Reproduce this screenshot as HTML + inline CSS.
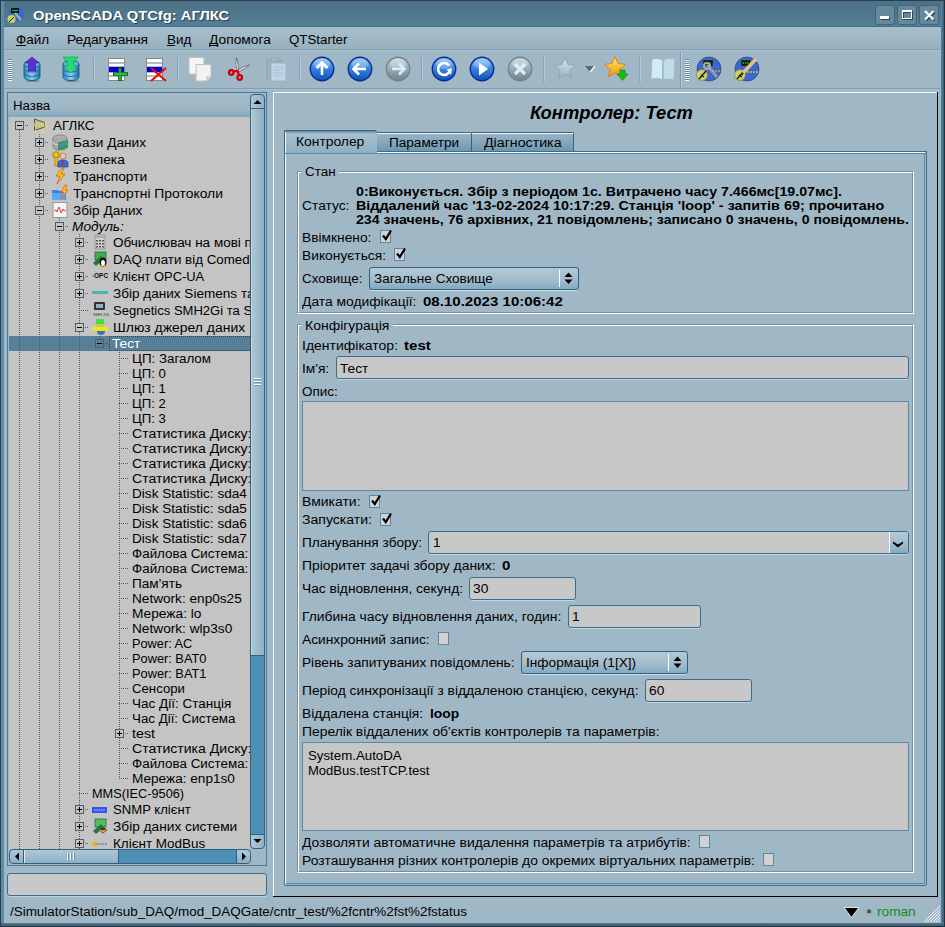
<!DOCTYPE html>
<html><head><meta charset="utf-8"><title>OpenSCADA QTCfg</title><style>
*{margin:0;padding:0;box-sizing:border-box}
html,body{width:945px;height:927px;overflow:hidden;background:#527d94}
body{position:relative;font-family:"Liberation Sans",sans-serif}
.a{position:absolute}
.t{position:absolute;white-space:pre;transform-origin:0 0;font-family:"Liberation Sans",sans-serif}
svg{position:absolute;overflow:visible}
</style></head><body>
<div class="a" style="left:0px;top:0px;width:945px;height:927px;background:#527d94"></div>
<div class="a" style="left:0px;top:0px;width:945px;height:1px;background:#2a3f4c"></div>
<div class="a" style="left:0px;top:0px;width:1px;height:927px;background:#2a3f4c"></div>
<div class="a" style="left:944px;top:0px;width:1px;height:927px;background:#22343f"></div>
<div class="a" style="left:0px;top:926px;width:945px;height:1px;background:#22343f"></div>
<div class="a" style="left:1px;top:1px;width:3px;height:925px;background:#5f8ca5"></div>
<div class="a" style="left:941px;top:1px;width:3px;height:925px;background:linear-gradient(90deg,#5a86a0,#3c5c6e)"></div>
<div class="a" style="left:1px;top:923px;width:943px;height:3px;background:linear-gradient(#4e7a94,#3a5a6c)"></div>
<div class="a" style="left:4px;top:1px;width:937px;height:25px;background:linear-gradient(#4c7186,#537e95)"></div>
<div class="a" style="left:4px;top:26px;width:937px;height:1px;background:#466d82"></div>
<div class="a" style="left:875px;top:5px;width:20px;height:20px;background:#65899d;border:1px solid #456476;border-radius:3px"></div>
<div class="a" style="left:897px;top:5px;width:20px;height:20px;background:#65899d;border:1px solid #456476;border-radius:3px"></div>
<div class="a" style="left:919px;top:5px;width:20px;height:20px;background:#65899d;border:1px solid #456476;border-radius:3px"></div>
<div class="a" style="left:881px;top:17px;width:9px;height:3px;background:#2e4654"></div>
<div class="a" style="left:880px;top:16px;width:9px;height:3px;background:#fff"></div>
<div class="a" style="left:903px;top:11px;width:10px;height:9px;border:1.5px solid #2e4654;border-top-width:2px"></div>
<div class="a" style="left:902px;top:10px;width:10px;height:9px;border:1.5px solid #fff;border-top-width:2px"></div>
<svg class="a" style="left:923px;top:9px" width="13" height="13"><path d="M2.5 2.5L10.5 10.5M10.5 2.5L2.5 10.5" stroke="#2e4654" stroke-width="2" transform="translate(1,1)"/><path d="M2 2L10.5 10.5M10.5 2L2 10.5" stroke="#fff" stroke-width="2"/></svg>
<div class="t" style="left:33px;top:8px;font-size:13.5px;line-height:16px;color:#fff;transform:scaleX(1.0927);font-weight:bold;text-shadow:1px 1px 1px rgba(20,40,50,.7);">OpenSCADA QTCfg: АГЛКС</div>
<div class="a" style="left:4px;top:27px;width:937px;height:22px;background:linear-gradient(#a7bfcc,#98b1bf)"></div>
<div class="a" style="left:4px;top:49px;width:937px;height:1px;background:#7e9eb1"></div>
<div class="a" style="left:4px;top:50px;width:937px;height:1px;background:#aac1cd"></div>
<div class="a" style="left:4px;top:51px;width:937px;height:37px;background:#a0b8c6"></div>
<div class="a" style="left:4px;top:88px;width:937px;height:1px;background:#7e9eb1"></div>
<div class="a" style="left:4px;top:89px;width:937px;height:1px;background:#a9c0cc"></div>
<div class="a" style="left:4px;top:90px;width:937px;height:833px;background:#a0b8c6"></div>
<div class="t" style="left:16px;top:32px;font-size:12.5px;line-height:16px;color:#000;transform:scaleX(1.0788);">Файл</div>
<div class="a" style="left:16px;top:45px;width:10px;height:1px;background:#000"></div>
<div class="t" style="left:67px;top:32px;font-size:12.5px;line-height:16px;color:#000;transform:scaleX(1.1013);">Редагування</div>
<div class="t" style="left:167px;top:32px;font-size:12.5px;line-height:16px;color:#000;transform:scaleX(1.0753);">Вид</div>
<div class="a" style="left:167px;top:45px;width:8px;height:1px;background:#000"></div>
<div class="t" style="left:209px;top:32px;font-size:12.5px;line-height:16px;color:#000;transform:scaleX(1.1054);">Допомога</div>
<div class="a" style="left:209px;top:45px;width:9px;height:1px;background:#000"></div>
<div class="t" style="left:289px;top:32px;font-size:12.5px;line-height:16px;color:#000;transform:scaleX(1.0644);">QTStarter</div>
<div class="a" style="left:7px;top:92px;width:260px;height:774px;border:1px solid #4d7a96"></div>
<div class="a" style="left:8px;top:93px;width:242px;height:24px;background:linear-gradient(#a4bcca 0,#9db6c4 70%,#7fa8c0 100%)"></div>
<div class="t" style="left:13px;top:98px;font-size:12.5px;line-height:16px;color:#000;transform:scaleX(1.0616);">Назва</div>
<div class="a" style="left:9px;top:117px;width:241px;height:732px;background:#c4c4c4"></div>
<div class="a" style="left:250px;top:108px;width:15px;height:728px;background:#4e8fb4;border-left:1px solid #2f6080;border-right:1px solid #2f6080"></div>
<div class="a" style="left:250px;top:108px;width:15px;height:548px;background:linear-gradient(90deg,#b0c8d6,#8eb0c4);border:1px solid #2f6080"></div>
<div class="a" style="left:251px;top:109px;width:1px;height:546px;background:#c4d8e2"></div>
<div class="a" style="left:250px;top:94px;width:15px;height:15px;background:linear-gradient(90deg,#b0c8d6,#8eb0c4);border:1px solid #2f6080;border-radius:4px 4px 0 0"></div>
<div class="a" style="left:250px;top:834px;width:15px;height:15px;background:linear-gradient(90deg,#b0c8d6,#8eb0c4);border:1px solid #2f6080;border-radius:0 0 4px 4px"></div>
<svg class="a" style="left:253px;top:99px" width="9" height="6"><path d="M0.5 5L4.5 1L8.5 5Z" fill="#000"/></svg>
<svg class="a" style="left:253px;top:838px" width="9" height="6"><path d="M0.5 1L4.5 5L8.5 1Z" fill="#000"/></svg>
<div class="a" style="left:254px;top:378px;width:7px;height:1px;background:#fff"></div>
<div class="a" style="left:254px;top:379px;width:7px;height:1px;background:#6a96b0"></div>
<div class="a" style="left:254px;top:381px;width:7px;height:1px;background:#fff"></div>
<div class="a" style="left:254px;top:382px;width:7px;height:1px;background:#6a96b0"></div>
<div class="a" style="left:254px;top:384px;width:7px;height:1px;background:#fff"></div>
<div class="a" style="left:254px;top:385px;width:7px;height:1px;background:#6a96b0"></div>
<div class="a" style="left:23px;top:849px;width:214px;height:15px;background:#4e8fb4;border-top:1px solid #2f6080;border-bottom:1px solid #2f6080"></div>
<div class="a" style="left:23px;top:849px;width:96px;height:15px;background:linear-gradient(#b0c8d6,#8eb0c4);border:1px solid #2f6080"></div>
<div class="a" style="left:24px;top:850px;width:1px;height:13px;background:#e0ecf2"></div>
<div class="a" style="left:9px;top:849px;width:15px;height:15px;background:linear-gradient(#b0c8d6,#8eb0c4);border:1px solid #2f6080;border-radius:4px 0 0 4px"></div>
<div class="a" style="left:236px;top:849px;width:15px;height:15px;background:linear-gradient(#b0c8d6,#8eb0c4);border:1px solid #2f6080;border-radius:0 4px 4px 0"></div>
<svg class="a" style="left:14px;top:852px" width="6" height="9"><path d="M5 0.5L1 4.5L5 8.5Z" fill="#000"/></svg>
<svg class="a" style="left:241px;top:852px" width="6" height="9"><path d="M1 0.5L5 4.5L1 8.5Z" fill="#000"/></svg>
<div class="a" style="left:67px;top:853px;width:1px;height:7px;background:#fff"></div>
<div class="a" style="left:68px;top:853px;width:1px;height:7px;background:#6a96b0"></div>
<div class="a" style="left:70px;top:853px;width:1px;height:7px;background:#fff"></div>
<div class="a" style="left:71px;top:853px;width:1px;height:7px;background:#6a96b0"></div>
<div class="a" style="left:73px;top:853px;width:1px;height:7px;background:#fff"></div>
<div class="a" style="left:74px;top:853px;width:1px;height:7px;background:#6a96b0"></div>
<div class="a" style="left:251px;top:849px;width:15px;height:15px;background:#a0b8c6"></div>
<div class="a" style="left:7px;top:873px;width:260px;height:23px;background:#c8c8c8;border:1px solid #3a6e90;border-radius:3px"></div>
<div class="a" style="left:9px;top:896px;width:257px;height:1px;background:#c0d4de"></div>
<div class="a" style="left:273px;top:92px;width:1px;height:805px;background:#f4f8fa"></div>
<div class="a" style="left:273px;top:92px;width:665px;height:1px;background:#f4f8fa"></div>
<div class="a" style="left:937px;top:92px;width:1px;height:805px;background:#000"></div>
<div class="a" style="left:273px;top:896px;width:665px;height:1px;background:#000"></div>
<div class="t" style="left:10px;top:904px;font-size:12.5px;line-height:16px;color:#000;transform:scaleX(1.0747);">/SimulatorStation/sub_DAQ/mod_DAQGate/cntr_test/%2fcntr%2fst%2fstatus</div>
<div class="t" style="left:877px;top:904px;font-size:12.5px;line-height:16px;color:#0f8f10;transform:scaleX(1.0913);">roman</div>
<div class="t" style="left:866px;top:906px;font-size:12.5px;line-height:16px;color:#222;transform:scaleX(1.2308);">*</div>
<svg class="a" style="left:843px;top:906px" width="18" height="13"><path d="M1 1.5H16L8.5 11.5Z" fill="#000" stroke="#dde6ea" stroke-width="1"/></svg>
<svg class="a" style="left:923px;top:905px" width="18" height="18"><g stroke="#f0f4f6" stroke-width="1"><line x1="17" y1="1" x2="1" y2="17"/><line x1="17" y1="4" x2="4" y2="17"/><line x1="17" y1="7" x2="7" y2="17"/><line x1="17" y1="10" x2="10" y2="17"/><line x1="17" y1="13" x2="13" y2="17"/><line x1="17" y1="16" x2="16" y2="17"/></g></svg>
<div class="t" style="left:530px;top:102px;font-size:17.7px;line-height:22px;color:#000;transform:scaleX(1.0380);font-weight:bold;font-style:italic;">Контролер: Тест</div>
<div class="a" style="left:284px;top:153px;width:1px;height:732px;background:#3d6f8f"></div>
<div class="a" style="left:285px;top:153px;width:1px;height:731px;background:#f4f8fa"></div>
<div class="a" style="left:926px;top:151px;width:1px;height:734px;background:#3d6f8f"></div>
<div class="a" style="left:924px;top:153px;width:1px;height:731px;background:#5b8aa5"></div>
<div class="a" style="left:285px;top:885px;width:641px;height:1px;background:#3d6f8f"></div>
<div class="a" style="left:286px;top:883px;width:639px;height:1px;background:#5b8aa5"></div>
<div class="a" style="left:376px;top:151px;width:550px;height:1px;background:#3d6f8f"></div>
<div class="a" style="left:376px;top:152px;width:549px;height:1px;background:#f4f8fa"></div>
<div class="a" style="left:284px;top:153px;width:642px;height:1px;background:#5a88a4"></div>
<div class="a" style="left:376px;top:132px;width:96px;height:19px;background:linear-gradient(#9ab6c7,#6e98b0);border:1px solid #3d6278;border-bottom:none;border-radius:2px 2px 0 0"></div>
<div class="a" style="left:377px;top:133px;width:94px;height:1px;background:#f4f8fa"></div>
<div class="a" style="left:471px;top:132px;width:103px;height:19px;background:linear-gradient(#9ab6c7,#6e98b0);border:1px solid #3d6278;border-bottom:none;border-radius:2px 2px 0 0"></div>
<div class="a" style="left:472px;top:133px;width:101px;height:1px;background:#f4f8fa"></div>
<div class="a" style="left:284px;top:130px;width:93px;height:23px;background:linear-gradient(#5f859c 0,#a6c0ce 3px,#8eb0c3 100%);border:1px solid #3d6278;border-bottom:none;border-right:none;border-radius:2px 2px 0 0"></div>
<div class="a" style="left:285px;top:132px;width:1px;height:21px;background:#f4f8fa"></div>
<div class="t" style="left:296px;top:134px;font-size:12.5px;line-height:16px;color:#000;transform:scaleX(1.1074);">Контролер</div>
<div class="t" style="left:389px;top:135px;font-size:12.5px;line-height:16px;color:#000;transform:scaleX(1.0861);">Параметри</div>
<div class="t" style="left:484px;top:135px;font-size:12.5px;line-height:16px;color:#000;transform:scaleX(1.1360);">Діагностика</div>
<div class="a" style="left:297px;top:171px;width:617px;height:143px;border:1px solid #7c8e98;border-right-color:#fff;border-bottom-color:#fff"></div>
<div class="a" style="left:298px;top:172px;width:615px;height:141px;border:1px solid #fff;border-right-color:#7c8e98;border-bottom-color:#7c8e98"></div>
<div class="a" style="left:301px;top:167px;width:38px;height:8px;background:#a0b8c6"></div>
<div class="t" style="left:305px;top:164px;font-size:12.5px;line-height:16px;color:#000;transform:scaleX(1.0741);">Стан</div>
<div class="t" style="left:356px;top:184px;font-size:12.5px;line-height:16px;color:#000;transform:scaleX(1.1357);font-weight:bold;">0:Виконується. Збір з періодом 1с. Витрачено часу 7.466мс[19.07мс].</div>
<div class="t" style="left:356px;top:198px;font-size:12.5px;line-height:16px;color:#000;transform:scaleX(1.1490);font-weight:bold;">Віддалений час '13-02-2024 10:17:29. Станція 'loop' - запитів 69; прочитано</div>
<div class="t" style="left:356px;top:212px;font-size:12.5px;line-height:16px;color:#000;transform:scaleX(1.1303);font-weight:bold;">234 значень, 76 архівних, 21 повідомлень; записано 0 значень, 0 повідомлень.</div>
<div class="t" style="left:302px;top:198px;font-size:12.5px;line-height:16px;color:#000;transform:scaleX(1.1039);">Статус:</div>
<div class="t" style="left:302px;top:230px;font-size:12.5px;line-height:16px;color:#000;transform:scaleX(1.1014);">Ввімкнено:</div>
<div class="a" style="left:380px;top:230px;width:11px;height:13px;background:#d2d2d2;border:1px solid #5b88a6"></div>
<svg class="a" style="left:382px;top:229px" width="10" height="12"><path d="M1 6.5L3.8 10L9 1.5" fill="none" stroke="#000" stroke-width="2.2"/></svg>
<div class="t" style="left:302px;top:248px;font-size:12.5px;line-height:16px;color:#000;transform:scaleX(1.1040);">Виконується:</div>
<div class="a" style="left:394px;top:248px;width:11px;height:13px;background:#d2d2d2;border:1px solid #5b88a6"></div>
<svg class="a" style="left:396px;top:247px" width="10" height="12"><path d="M1 6.5L3.8 10L9 1.5" fill="none" stroke="#000" stroke-width="2.2"/></svg>
<div class="t" style="left:302px;top:271px;font-size:12.5px;line-height:16px;color:#000;transform:scaleX(1.0736);">Сховище:</div>
<div class="a" style="left:369px;top:267px;width:210px;height:23px;background:linear-gradient(#b3cad7,#a2bbca 60%,#7fabc4);border:1px solid #2f6080;border-radius:3px"></div>
<div class="a" style="left:371px;top:290px;width:206px;height:1px;background:#d3dfe5"></div>
<div class="a" style="left:559px;top:270px;width:1px;height:17px;background:#fff"></div>
<svg class="a" style="left:564px;top:272px" width="9" height="13"><path d="M0.5 5L4.5 0.5L8.5 5Z M0.5 7.5L4.5 12L8.5 7.5Z" fill="#000"/></svg>
<div class="t" style="left:374px;top:271px;font-size:12.5px;line-height:16px;color:#000;transform:scaleX(1.0838);">Загальне Сховище</div>
<div class="t" style="left:302px;top:294px;font-size:12.5px;line-height:16px;color:#000;transform:scaleX(1.1075);">Дата модифікації:</div>
<div class="t" style="left:423px;top:294px;font-size:12.5px;line-height:16px;color:#000;transform:scaleX(1.2043);font-weight:bold;">08.10.2023 10:06:42</div>
<div class="a" style="left:297px;top:324px;width:617px;height:549px;border:1px solid #7c8e98;border-right-color:#fff;border-bottom-color:#fff"></div>
<div class="a" style="left:298px;top:325px;width:615px;height:547px;border:1px solid #fff;border-right-color:#7c8e98;border-bottom-color:#7c8e98"></div>
<div class="a" style="left:301px;top:320px;width:92px;height:8px;background:#a0b8c6"></div>
<div class="t" style="left:305px;top:318px;font-size:12.5px;line-height:16px;color:#000;transform:scaleX(1.1182);">Конфігурація</div>
<div class="t" style="left:302px;top:338px;font-size:12.5px;line-height:16px;color:#000;transform:scaleX(1.1197);">Ідентифікатор:</div>
<div class="t" style="left:404px;top:338px;font-size:12.5px;line-height:16px;color:#000;transform:scaleX(1.2038);font-weight:bold;">test</div>
<div class="t" style="left:302px;top:361px;font-size:12.5px;line-height:16px;color:#000;transform:scaleX(1.0993);">Ім'я:</div>
<div class="a" style="left:336px;top:356px;width:573px;height:23px;background:#c8c8c8;border:1px solid #3a6e90;border-radius:3px"></div>
<div class="a" style="left:338px;top:379px;width:569px;height:1px;background:#c3d5df"></div>
<div class="t" style="left:340px;top:361px;font-size:12.5px;line-height:16px;color:#000;transform:scaleX(1.0942);">Тест</div>
<div class="t" style="left:302px;top:384px;font-size:12.5px;line-height:16px;color:#000;transform:scaleX(1.0762);">Опис:</div>
<div class="a" style="left:302px;top:401px;width:607px;height:90px;background:#c6c6c6;border:1px solid #5a8aa8"></div>
<div class="t" style="left:302px;top:494px;font-size:12.5px;line-height:16px;color:#000;transform:scaleX(1.1175);">Вмикати:</div>
<div class="a" style="left:369px;top:495px;width:11px;height:13px;background:#d2d2d2;border:1px solid #5b88a6"></div>
<svg class="a" style="left:371px;top:494px" width="10" height="12"><path d="M1 6.5L3.8 10L9 1.5" fill="none" stroke="#000" stroke-width="2.2"/></svg>
<div class="t" style="left:302px;top:512px;font-size:12.5px;line-height:16px;color:#000;transform:scaleX(1.1253);">Запускати:</div>
<div class="a" style="left:380px;top:513px;width:11px;height:13px;background:#d2d2d2;border:1px solid #5b88a6"></div>
<svg class="a" style="left:382px;top:512px" width="10" height="12"><path d="M1 6.5L3.8 10L9 1.5" fill="none" stroke="#000" stroke-width="2.2"/></svg>
<div class="t" style="left:302px;top:535px;font-size:12.5px;line-height:16px;color:#000;transform:scaleX(1.0900);">Планування збору:</div>
<div class="a" style="left:428px;top:531px;width:481px;height:23px;background:#c8c8c8;border:1px solid #3a6e90;border-radius:3px"></div>
<div class="a" style="left:889px;top:532px;width:19px;height:21px;background:linear-gradient(#b3cad7,#a2bbca 60%,#7fabc4);border-left:1px solid #fff;border-radius:0 2px 2px 0"></div>
<svg class="a" style="left:893px;top:541px" width="10" height="7"><path d="M0 0.5L5 3.5L10 0.5V2.5L5 6.5L0 2.5Z" fill="#000"/></svg>
<div class="a" style="left:430px;top:554px;width:477px;height:1px;background:#c3d5df"></div>
<div class="t" style="left:433px;top:535px;font-size:12.5px;line-height:16px;color:#000;transform:scaleX(1.0989);">1</div>
<div class="t" style="left:302px;top:558px;font-size:12.5px;line-height:16px;color:#000;transform:scaleX(1.1101);">Пріоритет задачі збору даних:</div>
<div class="t" style="left:502px;top:558px;font-size:12.5px;line-height:16px;color:#000;transform:scaleX(1.2022);font-weight:bold;">0</div>
<div class="t" style="left:302px;top:581px;font-size:12.5px;line-height:16px;color:#000;transform:scaleX(1.0999);">Час відновлення, секунд:</div>
<div class="a" style="left:469px;top:577px;width:107px;height:23px;background:#c8c8c8;border:1px solid #3a6e90;border-radius:3px"></div>
<div class="a" style="left:471px;top:600px;width:103px;height:1px;background:#c3d5df"></div>
<div class="t" style="left:473px;top:581px;font-size:12.5px;line-height:16px;color:#000;transform:scaleX(1.0989);">30</div>
<div class="t" style="left:302px;top:609px;font-size:12.5px;line-height:16px;color:#000;transform:scaleX(1.1112);">Глибина часу відновлення даних, годин:</div>
<div class="a" style="left:568px;top:605px;width:133px;height:23px;background:#c8c8c8;border:1px solid #3a6e90;border-radius:3px"></div>
<div class="a" style="left:570px;top:628px;width:129px;height:1px;background:#c3d5df"></div>
<div class="t" style="left:572px;top:609px;font-size:12.5px;line-height:16px;color:#000;transform:scaleX(1.0989);">1</div>
<div class="t" style="left:302px;top:632px;font-size:12.5px;line-height:16px;color:#000;transform:scaleX(1.1001);">Асинхронний запис:</div>
<div class="a" style="left:438px;top:632px;width:11px;height:13px;background:#d2d2d2;border:1px solid #5b88a6"></div>
<div class="t" style="left:302px;top:655px;font-size:12.5px;line-height:16px;color:#000;transform:scaleX(1.0944);">Рівень запитуваних повідомлень:</div>
<div class="a" style="left:521px;top:651px;width:167px;height:23px;background:linear-gradient(#b3cad7,#a2bbca 60%,#7fabc4);border:1px solid #2f6080;border-radius:3px"></div>
<div class="a" style="left:523px;top:674px;width:163px;height:1px;background:#d3dfe5"></div>
<div class="a" style="left:668px;top:654px;width:1px;height:17px;background:#fff"></div>
<svg class="a" style="left:673px;top:656px" width="9" height="13"><path d="M0.5 5L4.5 0.5L8.5 5Z M0.5 7.5L4.5 12L8.5 7.5Z" fill="#000"/></svg>
<div class="t" style="left:526px;top:655px;font-size:12.5px;line-height:16px;color:#000;transform:scaleX(1.0920);">Інформація (1[X])</div>
<div class="t" style="left:302px;top:683px;font-size:12.5px;line-height:16px;color:#000;transform:scaleX(1.1040);">Період синхронізації з віддаленою станцією, секунд:</div>
<div class="a" style="left:645px;top:679px;width:107px;height:23px;background:#c8c8c8;border:1px solid #3a6e90;border-radius:3px"></div>
<div class="a" style="left:647px;top:702px;width:103px;height:1px;background:#c3d5df"></div>
<div class="t" style="left:649px;top:683px;font-size:12.5px;line-height:16px;color:#000;transform:scaleX(1.0989);">60</div>
<div class="t" style="left:302px;top:706px;font-size:12.5px;line-height:16px;color:#000;transform:scaleX(1.1002);">Віддалена станція:</div>
<div class="t" style="left:430px;top:706px;font-size:12.5px;line-height:16px;color:#000;transform:scaleX(1.1066);font-weight:bold;">loop</div>
<div class="t" style="left:302px;top:724px;font-size:12.5px;line-height:16px;color:#000;transform:scaleX(1.1120);">Перелік віддалених об'єктів контролерів та параметрів:</div>
<div class="a" style="left:302px;top:742px;width:607px;height:89px;background:#c6c6c6;border:1px solid #5a8aa8"></div>
<div class="t" style="left:308px;top:748px;font-size:12.5px;line-height:16px;color:#000;transform:scaleX(1.0616);">System.AutoDA</div>
<div class="t" style="left:308px;top:763px;font-size:12.5px;line-height:16px;color:#000;transform:scaleX(1.0429);">ModBus.testTCP.test</div>
<div class="t" style="left:302px;top:835px;font-size:12.5px;line-height:16px;color:#000;transform:scaleX(1.1079);">Дозволяти автоматичне видалення параметрів та атрибутів:</div>
<div class="a" style="left:699px;top:835px;width:11px;height:13px;background:#d2d2d2;border:1px solid #5b88a6"></div>
<div class="t" style="left:302px;top:853px;font-size:12.5px;line-height:16px;color:#000;transform:scaleX(1.1082);">Розташування різних контролерів до окремих віртуальних параметрів:</div>
<div class="a" style="left:763px;top:853px;width:11px;height:13px;background:#d2d2d2;border:1px solid #5b88a6"></div>
<div class="a" style="left:0;top:0;width:945px;height:927px;clip-path:polygon(9px 117px,250px 117px,250px 849px,9px 849px)">
<div class="a" style="left:9px;top:336px;width:241px;height:15px;background:#587f98"></div>
<div class="a" style="left:109px;top:336px;width:142px;height:1px;background:repeating-linear-gradient(to right,#2e4250 0 1px,transparent 1px 2px)"></div>
<div class="a" style="left:109px;top:350px;width:142px;height:1px;background:repeating-linear-gradient(to right,#2e4250 0 1px,transparent 1px 2px)"></div>
<div class="a" style="left:109px;top:336px;width:1px;height:15px;background:repeating-linear-gradient(to bottom,#2e4250 0 1px,transparent 1px 2px)"></div>
<div class="a" style="left:19px;top:130px;width:1px;height:719px;background:repeating-linear-gradient(to bottom,#5a5a5a 0 1px,transparent 1px 2px)"></div>
<div class="a" style="left:39px;top:134px;width:1px;height:715px;background:repeating-linear-gradient(to bottom,#5a5a5a 0 1px,transparent 1px 2px)"></div>
<div class="a" style="left:59px;top:218px;width:1px;height:631px;background:repeating-linear-gradient(to bottom,#5a5a5a 0 1px,transparent 1px 2px)"></div>
<div class="a" style="left:79px;top:234px;width:1px;height:615px;background:repeating-linear-gradient(to bottom,#5a5a5a 0 1px,transparent 1px 2px)"></div>
<div class="a" style="left:99px;top:336px;width:1px;height:7px;background:repeating-linear-gradient(to bottom,#5a5a5a 0 1px,transparent 1px 2px)"></div>
<div class="a" style="left:119px;top:352px;width:1px;height:427px;background:repeating-linear-gradient(to bottom,#5a5a5a 0 1px,transparent 1px 2px)"></div>
<div class="a" style="left:25px;top:125px;width:3px;height:1px;background:repeating-linear-gradient(to right,#5a5a5a 0 1px,transparent 1px 2px)"></div>
<div class="t" style="left:53px;top:118px;font-size:12.5px;line-height:16px;color:#000;transform:scaleX(1.0689);">АГЛКС</div>
<div class="a" style="left:15px;top:121px;width:9px;height:9px;background:#c4c4c4;border:1px solid #4e5d68"></div>
<div class="a" style="left:17px;top:125px;width:5px;height:1px;background:#000"></div>
<div class="a" style="left:45px;top:142px;width:3px;height:1px;background:repeating-linear-gradient(to right,#5a5a5a 0 1px,transparent 1px 2px)"></div>
<div class="t" style="left:73px;top:135px;font-size:12.5px;line-height:16px;color:#000;transform:scaleX(1.0943);">Бази Даних</div>
<div class="a" style="left:35px;top:138px;width:9px;height:9px;background:#c4c4c4;border:1px solid #4e5d68"></div>
<div class="a" style="left:37px;top:142px;width:5px;height:1px;background:#000"></div>
<div class="a" style="left:39px;top:140px;width:1px;height:5px;background:#000"></div>
<div class="a" style="left:45px;top:159px;width:3px;height:1px;background:repeating-linear-gradient(to right,#5a5a5a 0 1px,transparent 1px 2px)"></div>
<div class="t" style="left:73px;top:152px;font-size:12.5px;line-height:16px;color:#000;transform:scaleX(1.1020);">Безпека</div>
<div class="a" style="left:35px;top:155px;width:9px;height:9px;background:#c4c4c4;border:1px solid #4e5d68"></div>
<div class="a" style="left:37px;top:159px;width:5px;height:1px;background:#000"></div>
<div class="a" style="left:39px;top:157px;width:1px;height:5px;background:#000"></div>
<div class="a" style="left:45px;top:176px;width:3px;height:1px;background:repeating-linear-gradient(to right,#5a5a5a 0 1px,transparent 1px 2px)"></div>
<div class="t" style="left:73px;top:169px;font-size:12.5px;line-height:16px;color:#000;transform:scaleX(1.1078);">Транспорти</div>
<div class="a" style="left:35px;top:172px;width:9px;height:9px;background:#c4c4c4;border:1px solid #4e5d68"></div>
<div class="a" style="left:37px;top:176px;width:5px;height:1px;background:#000"></div>
<div class="a" style="left:39px;top:174px;width:1px;height:5px;background:#000"></div>
<div class="a" style="left:45px;top:193px;width:3px;height:1px;background:repeating-linear-gradient(to right,#5a5a5a 0 1px,transparent 1px 2px)"></div>
<div class="t" style="left:73px;top:186px;font-size:12.5px;line-height:16px;color:#000;transform:scaleX(1.1105);">Транспортні Протоколи</div>
<div class="a" style="left:35px;top:189px;width:9px;height:9px;background:#c4c4c4;border:1px solid #4e5d68"></div>
<div class="a" style="left:37px;top:193px;width:5px;height:1px;background:#000"></div>
<div class="a" style="left:39px;top:191px;width:1px;height:5px;background:#000"></div>
<div class="a" style="left:45px;top:210px;width:3px;height:1px;background:repeating-linear-gradient(to right,#5a5a5a 0 1px,transparent 1px 2px)"></div>
<div class="t" style="left:73px;top:203px;font-size:12.5px;line-height:16px;color:#000;transform:scaleX(1.0926);">Збір Даних</div>
<div class="a" style="left:35px;top:206px;width:9px;height:9px;background:#c4c4c4;border:1px solid #4e5d68"></div>
<div class="a" style="left:37px;top:210px;width:5px;height:1px;background:#000"></div>
<div class="a" style="left:65px;top:226px;width:3px;height:1px;background:repeating-linear-gradient(to right,#5a5a5a 0 1px,transparent 1px 2px)"></div>
<div class="t" style="left:72px;top:219px;font-size:12.5px;line-height:16px;color:#000;transform:scaleX(1.0960);font-style:italic;">Модуль:</div>
<div class="a" style="left:55px;top:222px;width:9px;height:9px;background:#c4c4c4;border:1px solid #4e5d68"></div>
<div class="a" style="left:57px;top:226px;width:5px;height:1px;background:#000"></div>
<div class="a" style="left:85px;top:242px;width:3px;height:1px;background:repeating-linear-gradient(to right,#5a5a5a 0 1px,transparent 1px 2px)"></div>
<div class="t" style="left:113px;top:235px;font-size:12.5px;line-height:16px;color:#000;transform:scaleX(1.0804);">Обчислювач на мові п</div>
<div class="a" style="left:75px;top:238px;width:9px;height:9px;background:#c4c4c4;border:1px solid #4e5d68"></div>
<div class="a" style="left:77px;top:242px;width:5px;height:1px;background:#000"></div>
<div class="a" style="left:79px;top:240px;width:1px;height:5px;background:#000"></div>
<div class="a" style="left:85px;top:259px;width:3px;height:1px;background:repeating-linear-gradient(to right,#5a5a5a 0 1px,transparent 1px 2px)"></div>
<div class="t" style="left:113px;top:252px;font-size:12.5px;line-height:16px;color:#000;transform:scaleX(1.0681);">DAQ плати від Comed</div>
<div class="a" style="left:75px;top:255px;width:9px;height:9px;background:#c4c4c4;border:1px solid #4e5d68"></div>
<div class="a" style="left:77px;top:259px;width:5px;height:1px;background:#000"></div>
<div class="a" style="left:79px;top:257px;width:1px;height:5px;background:#000"></div>
<div class="a" style="left:85px;top:276px;width:3px;height:1px;background:repeating-linear-gradient(to right,#5a5a5a 0 1px,transparent 1px 2px)"></div>
<div class="t" style="left:113px;top:269px;font-size:12.5px;line-height:16px;color:#000;transform:scaleX(1.0306);">Клієнт OPC-UA</div>
<div class="a" style="left:75px;top:272px;width:9px;height:9px;background:#c4c4c4;border:1px solid #4e5d68"></div>
<div class="a" style="left:77px;top:276px;width:5px;height:1px;background:#000"></div>
<div class="a" style="left:79px;top:274px;width:1px;height:5px;background:#000"></div>
<div class="a" style="left:85px;top:293px;width:3px;height:1px;background:repeating-linear-gradient(to right,#5a5a5a 0 1px,transparent 1px 2px)"></div>
<div class="t" style="left:113px;top:286px;font-size:12.5px;line-height:16px;color:#000;transform:scaleX(1.0849);">Збір даних Siemens та</div>
<div class="a" style="left:75px;top:289px;width:9px;height:9px;background:#c4c4c4;border:1px solid #4e5d68"></div>
<div class="a" style="left:77px;top:293px;width:5px;height:1px;background:#000"></div>
<div class="a" style="left:79px;top:291px;width:1px;height:5px;background:#000"></div>
<div class="a" style="left:79px;top:310px;width:9px;height:1px;background:repeating-linear-gradient(to right,#5a5a5a 0 1px,transparent 1px 2px)"></div>
<div class="t" style="left:113px;top:303px;font-size:12.5px;line-height:16px;color:#000;transform:scaleX(1.0431);">Segnetics SMH2Gi та S</div>
<div class="a" style="left:85px;top:327px;width:3px;height:1px;background:repeating-linear-gradient(to right,#5a5a5a 0 1px,transparent 1px 2px)"></div>
<div class="t" style="left:113px;top:320px;font-size:12.5px;line-height:16px;color:#000;transform:scaleX(1.1146);">Шлюз джерел даних</div>
<div class="a" style="left:75px;top:323px;width:9px;height:9px;background:#c4c4c4;border:1px solid #4e5d68"></div>
<div class="a" style="left:77px;top:327px;width:5px;height:1px;background:#000"></div>
<div class="a" style="left:105px;top:343px;width:3px;height:1px;background:repeating-linear-gradient(to right,#5a5a5a 0 1px,transparent 1px 2px)"></div>
<div class="t" style="left:112px;top:336px;font-size:12.5px;line-height:16px;color:#fff;transform:scaleX(1.0942);">Тест</div>
<div class="a" style="left:95px;top:339px;width:9px;height:9px;background:#587f98;border:1px solid #4e5d68"></div>
<div class="a" style="left:97px;top:343px;width:5px;height:1px;background:#000"></div>
<div class="a" style="left:119px;top:358px;width:9px;height:1px;background:repeating-linear-gradient(to right,#5a5a5a 0 1px,transparent 1px 2px)"></div>
<div class="t" style="left:132px;top:351px;font-size:12.5px;line-height:16px;color:#000;transform:scaleX(1.0685);">ЦП: Загалом</div>
<div class="a" style="left:119px;top:373px;width:9px;height:1px;background:repeating-linear-gradient(to right,#5a5a5a 0 1px,transparent 1px 2px)"></div>
<div class="t" style="left:132px;top:366px;font-size:12.5px;line-height:16px;color:#000;transform:scaleX(1.0530);">ЦП: 0</div>
<div class="a" style="left:119px;top:388px;width:9px;height:1px;background:repeating-linear-gradient(to right,#5a5a5a 0 1px,transparent 1px 2px)"></div>
<div class="t" style="left:132px;top:381px;font-size:12.5px;line-height:16px;color:#000;transform:scaleX(1.0530);">ЦП: 1</div>
<div class="a" style="left:119px;top:403px;width:9px;height:1px;background:repeating-linear-gradient(to right,#5a5a5a 0 1px,transparent 1px 2px)"></div>
<div class="t" style="left:132px;top:396px;font-size:12.5px;line-height:16px;color:#000;transform:scaleX(1.0530);">ЦП: 2</div>
<div class="a" style="left:119px;top:418px;width:9px;height:1px;background:repeating-linear-gradient(to right,#5a5a5a 0 1px,transparent 1px 2px)"></div>
<div class="t" style="left:132px;top:411px;font-size:12.5px;line-height:16px;color:#000;transform:scaleX(1.0530);">ЦП: 3</div>
<div class="a" style="left:119px;top:433px;width:9px;height:1px;background:repeating-linear-gradient(to right,#5a5a5a 0 1px,transparent 1px 2px)"></div>
<div class="t" style="left:132px;top:426px;font-size:12.5px;line-height:16px;color:#000;transform:scaleX(1.1256);">Статистика Диску:</div>
<div class="a" style="left:119px;top:448px;width:9px;height:1px;background:repeating-linear-gradient(to right,#5a5a5a 0 1px,transparent 1px 2px)"></div>
<div class="t" style="left:132px;top:441px;font-size:12.5px;line-height:16px;color:#000;transform:scaleX(1.1256);">Статистика Диску:</div>
<div class="a" style="left:119px;top:463px;width:9px;height:1px;background:repeating-linear-gradient(to right,#5a5a5a 0 1px,transparent 1px 2px)"></div>
<div class="t" style="left:132px;top:456px;font-size:12.5px;line-height:16px;color:#000;transform:scaleX(1.1256);">Статистика Диску:</div>
<div class="a" style="left:119px;top:478px;width:9px;height:1px;background:repeating-linear-gradient(to right,#5a5a5a 0 1px,transparent 1px 2px)"></div>
<div class="t" style="left:132px;top:471px;font-size:12.5px;line-height:16px;color:#000;transform:scaleX(1.1256);">Статистика Диску:</div>
<div class="a" style="left:119px;top:493px;width:9px;height:1px;background:repeating-linear-gradient(to right,#5a5a5a 0 1px,transparent 1px 2px)"></div>
<div class="t" style="left:132px;top:486px;font-size:12.5px;line-height:16px;color:#000;transform:scaleX(1.0883);">Disk Statistic: sda4</div>
<div class="a" style="left:119px;top:508px;width:9px;height:1px;background:repeating-linear-gradient(to right,#5a5a5a 0 1px,transparent 1px 2px)"></div>
<div class="t" style="left:132px;top:501px;font-size:12.5px;line-height:16px;color:#000;transform:scaleX(1.0883);">Disk Statistic: sda5</div>
<div class="a" style="left:119px;top:523px;width:9px;height:1px;background:repeating-linear-gradient(to right,#5a5a5a 0 1px,transparent 1px 2px)"></div>
<div class="t" style="left:132px;top:516px;font-size:12.5px;line-height:16px;color:#000;transform:scaleX(1.0883);">Disk Statistic: sda6</div>
<div class="a" style="left:119px;top:538px;width:9px;height:1px;background:repeating-linear-gradient(to right,#5a5a5a 0 1px,transparent 1px 2px)"></div>
<div class="t" style="left:132px;top:531px;font-size:12.5px;line-height:16px;color:#000;transform:scaleX(1.0883);">Disk Statistic: sda7</div>
<div class="a" style="left:119px;top:553px;width:9px;height:1px;background:repeating-linear-gradient(to right,#5a5a5a 0 1px,transparent 1px 2px)"></div>
<div class="t" style="left:132px;top:546px;font-size:12.5px;line-height:16px;color:#000;transform:scaleX(1.0715);">Файлова Система:</div>
<div class="a" style="left:119px;top:568px;width:9px;height:1px;background:repeating-linear-gradient(to right,#5a5a5a 0 1px,transparent 1px 2px)"></div>
<div class="t" style="left:132px;top:561px;font-size:12.5px;line-height:16px;color:#000;transform:scaleX(1.0715);">Файлова Система:</div>
<div class="a" style="left:119px;top:583px;width:9px;height:1px;background:repeating-linear-gradient(to right,#5a5a5a 0 1px,transparent 1px 2px)"></div>
<div class="t" style="left:132px;top:576px;font-size:12.5px;line-height:16px;color:#000;transform:scaleX(1.0888);">Пам'ять</div>
<div class="a" style="left:119px;top:598px;width:9px;height:1px;background:repeating-linear-gradient(to right,#5a5a5a 0 1px,transparent 1px 2px)"></div>
<div class="t" style="left:132px;top:591px;font-size:12.5px;line-height:16px;color:#000;transform:scaleX(1.0890);">Network: enp0s25</div>
<div class="a" style="left:119px;top:613px;width:9px;height:1px;background:repeating-linear-gradient(to right,#5a5a5a 0 1px,transparent 1px 2px)"></div>
<div class="t" style="left:132px;top:606px;font-size:12.5px;line-height:16px;color:#000;transform:scaleX(1.0976);">Мережа: lo</div>
<div class="a" style="left:119px;top:628px;width:9px;height:1px;background:repeating-linear-gradient(to right,#5a5a5a 0 1px,transparent 1px 2px)"></div>
<div class="t" style="left:132px;top:621px;font-size:12.5px;line-height:16px;color:#000;transform:scaleX(1.0932);">Network: wlp3s0</div>
<div class="a" style="left:119px;top:643px;width:9px;height:1px;background:repeating-linear-gradient(to right,#5a5a5a 0 1px,transparent 1px 2px)"></div>
<div class="t" style="left:132px;top:636px;font-size:12.5px;line-height:16px;color:#000;transform:scaleX(1.0212);">Power: AC</div>
<div class="a" style="left:119px;top:658px;width:9px;height:1px;background:repeating-linear-gradient(to right,#5a5a5a 0 1px,transparent 1px 2px)"></div>
<div class="t" style="left:132px;top:651px;font-size:12.5px;line-height:16px;color:#000;transform:scaleX(1.0232);">Power: BAT0</div>
<div class="a" style="left:119px;top:673px;width:9px;height:1px;background:repeating-linear-gradient(to right,#5a5a5a 0 1px,transparent 1px 2px)"></div>
<div class="t" style="left:132px;top:666px;font-size:12.5px;line-height:16px;color:#000;transform:scaleX(1.0232);">Power: BAT1</div>
<div class="a" style="left:119px;top:688px;width:9px;height:1px;background:repeating-linear-gradient(to right,#5a5a5a 0 1px,transparent 1px 2px)"></div>
<div class="t" style="left:132px;top:681px;font-size:12.5px;line-height:16px;color:#000;transform:scaleX(1.0557);">Сенсори</div>
<div class="a" style="left:119px;top:703px;width:9px;height:1px;background:repeating-linear-gradient(to right,#5a5a5a 0 1px,transparent 1px 2px)"></div>
<div class="t" style="left:132px;top:696px;font-size:12.5px;line-height:16px;color:#000;transform:scaleX(1.0800);">Час Дії: Станція</div>
<div class="a" style="left:119px;top:718px;width:9px;height:1px;background:repeating-linear-gradient(to right,#5a5a5a 0 1px,transparent 1px 2px)"></div>
<div class="t" style="left:132px;top:711px;font-size:12.5px;line-height:16px;color:#000;transform:scaleX(1.0664);">Час Дії: Система</div>
<div class="a" style="left:125px;top:733px;width:3px;height:1px;background:repeating-linear-gradient(to right,#5a5a5a 0 1px,transparent 1px 2px)"></div>
<div class="t" style="left:132px;top:726px;font-size:12.5px;line-height:16px;color:#000;transform:scaleX(1.1434);">test</div>
<div class="a" style="left:115px;top:729px;width:9px;height:9px;background:#c4c4c4;border:1px solid #4e5d68"></div>
<div class="a" style="left:117px;top:733px;width:5px;height:1px;background:#000"></div>
<div class="a" style="left:119px;top:731px;width:1px;height:5px;background:#000"></div>
<div class="a" style="left:119px;top:748px;width:9px;height:1px;background:repeating-linear-gradient(to right,#5a5a5a 0 1px,transparent 1px 2px)"></div>
<div class="t" style="left:132px;top:741px;font-size:12.5px;line-height:16px;color:#000;transform:scaleX(1.1256);">Статистика Диску:</div>
<div class="a" style="left:119px;top:763px;width:9px;height:1px;background:repeating-linear-gradient(to right,#5a5a5a 0 1px,transparent 1px 2px)"></div>
<div class="t" style="left:132px;top:756px;font-size:12.5px;line-height:16px;color:#000;transform:scaleX(1.0715);">Файлова Система:</div>
<div class="a" style="left:119px;top:778px;width:9px;height:1px;background:repeating-linear-gradient(to right,#5a5a5a 0 1px,transparent 1px 2px)"></div>
<div class="t" style="left:132px;top:771px;font-size:12.5px;line-height:16px;color:#000;transform:scaleX(1.0882);">Мережа: enp1s0</div>
<div class="a" style="left:79px;top:793px;width:9px;height:1px;background:repeating-linear-gradient(to right,#5a5a5a 0 1px,transparent 1px 2px)"></div>
<div class="t" style="left:92px;top:786px;font-size:12.5px;line-height:16px;color:#000;transform:scaleX(1.0196);">MMS(IEC-9506)</div>
<div class="a" style="left:85px;top:809px;width:3px;height:1px;background:repeating-linear-gradient(to right,#5a5a5a 0 1px,transparent 1px 2px)"></div>
<div class="t" style="left:113px;top:802px;font-size:12.5px;line-height:16px;color:#000;transform:scaleX(1.0487);">SNMP клієнт</div>
<div class="a" style="left:75px;top:805px;width:9px;height:9px;background:#c4c4c4;border:1px solid #4e5d68"></div>
<div class="a" style="left:77px;top:809px;width:5px;height:1px;background:#000"></div>
<div class="a" style="left:79px;top:807px;width:1px;height:5px;background:#000"></div>
<div class="a" style="left:85px;top:826px;width:3px;height:1px;background:repeating-linear-gradient(to right,#5a5a5a 0 1px,transparent 1px 2px)"></div>
<div class="t" style="left:113px;top:819px;font-size:12.5px;line-height:16px;color:#000;transform:scaleX(1.0963);">Збір даних системи</div>
<div class="a" style="left:75px;top:822px;width:9px;height:9px;background:#c4c4c4;border:1px solid #4e5d68"></div>
<div class="a" style="left:77px;top:826px;width:5px;height:1px;background:#000"></div>
<div class="a" style="left:79px;top:824px;width:1px;height:5px;background:#000"></div>
<div class="a" style="left:85px;top:843px;width:3px;height:1px;background:repeating-linear-gradient(to right,#5a5a5a 0 1px,transparent 1px 2px)"></div>
<div class="t" style="left:113px;top:836px;font-size:12.5px;line-height:16px;color:#000;transform:scaleX(1.0757);">Клієнт ModBus</div>
<div class="a" style="left:75px;top:839px;width:9px;height:9px;background:#c4c4c4;border:1px solid #4e5d68"></div>
<div class="a" style="left:77px;top:843px;width:5px;height:1px;background:#000"></div>
<div class="a" style="left:79px;top:841px;width:1px;height:5px;background:#000"></div>
<svg class="a" style="left:32px;top:117px" width="16" height="16" viewBox="0 0 16 16"><path d="M2.5 2L12.5 5.5V10L2.5 13.5Z" fill="#bdbdbd" stroke="#555" stroke-width="1"/><text x="1" y="10" font-size="5" font-weight="bold" fill="#e8d820" font-family="Liberation Sans" textLength="14" lengthAdjust="spacingAndGlyphs">АГЛКС</text><path d="M1 15H3.5L4 13M10 13L10.5 15H14" stroke="#e8e040" fill="none" stroke-width="1.2"/></svg>
<svg class="a" style="left:52px;top:134px" width="16" height="16" viewBox="0 0 16 16"><ellipse cx="8" cy="4" rx="7" ry="3" fill="#b0b0b0" stroke="#777" stroke-width=".8"/><path d="M1 4V13A7 3 0 0 0 15 13V4" fill="#a8a8a8" stroke="#777" stroke-width=".8"/><path d="M1 8A7 3 0 0 0 15 8" stroke="#ddd" fill="none"/><rect x="6" y="7" width="10" height="8" fill="#3a9a3a" transform="skewY(-15) translate(0,3)"/><rect x="7" y="9" width="8" height="3" fill="#4a8ad8" transform="skewY(-15) translate(0,3)"/></svg>
<svg class="a" style="left:52px;top:151px" width="16" height="16" viewBox="0 0 16 16"><circle cx="4" cy="4" r="3.3" fill="#f0c020" stroke="#b08000"/><rect x="3" y="6" width="2.5" height="9" fill="#f0c020" stroke="#b08000" stroke-width=".7"/><circle cx="11" cy="5" r="3" fill="#f0c8a0" stroke="#a07050" stroke-width=".7"/><path d="M6 16V12Q6 9 11 9Q16 9 16 12V16Z" fill="#3a6ad8" stroke="#2040a0" stroke-width=".7"/><path d="M11 9V14" stroke="#d02020" stroke-width="1.2"/></svg>
<svg class="a" style="left:52px;top:168px" width="16" height="16" viewBox="0 0 16 16"><path d="M10 0L4 8H8L5 16L13 6H9L12 0Z" fill="#f8d020" stroke="#e06010" stroke-width=".9"/></svg>
<svg class="a" style="left:52px;top:185px" width="16" height="16" viewBox="0 0 16 16"><path d="M0 5H6L7 6H14V15H0Z" fill="#3a80e0"/><path d="M0 8H14L13 15H0Z" fill="#5aa8f8"/><path d="M13 0L9 7H12L9 14L16 5H13L15 0Z" fill="#f8c820" stroke="#e06010" stroke-width=".8"/></svg>
<svg class="a" style="left:52px;top:202px" width="16" height="16" viewBox="0 0 16 16"><rect x="1" y="0.5" width="14" height="15" fill="#f4f4f4" stroke="#9a9a9a"/><path d="M2 9L4 8L5 10L7 5L9 11L11 7L12 9L14 8" stroke="#e03030" fill="none" stroke-width=".9"/></svg>
<svg class="a" style="left:92px;top:234px" width="16" height="16" viewBox="0 0 16 16"><rect x="3" y="1" width="10" height="14" fill="#d0d0d0" stroke="#8a8a8a" stroke-width=".8"/><rect x="4" y="2" width="8" height="2" fill="#a0b8a0"/><g fill="#555"><rect x="4" y="6" width="2" height="1.5"/><rect x="7" y="6" width="2" height="1.5"/><rect x="10" y="6" width="2" height="1.5"/><rect x="4" y="9" width="2" height="1.5"/><rect x="7" y="9" width="2" height="1.5"/><rect x="10" y="9" width="2" height="1.5"/><rect x="4" y="12" width="2" height="1.5"/><rect x="7" y="12" width="2" height="1.5"/><rect x="10" y="12" width="2" height="1.5"/></g></svg>
<svg class="a" style="left:92px;top:251px" width="16" height="16" viewBox="0 0 16 16"><rect x="3" y="1" width="11" height="8" fill="#40b040" stroke="#305a80" stroke-width=".8"/><path d="M1 12L9 5L12 8L4 15Z" fill="#207a40"/><ellipse cx="11" cy="11" rx="3.5" ry="4.5" fill="#111"/><ellipse cx="11" cy="12" rx="2" ry="3" fill="#fff"/><path d="M7 15H10M12 15H15" stroke="#f0b000" stroke-width="1.5"/></svg>
<svg class="a" style="left:92px;top:268px" width="16" height="16" viewBox="0 0 16 16"><path d="M0 8H3" stroke="#888"/><text x="2" y="10" font-size="6.5" font-weight="bold" fill="#111" font-family="Liberation Sans">OPC</text></svg>
<svg class="a" style="left:92px;top:285px" width="16" height="16" viewBox="0 0 16 16"><rect x="0" y="6" width="16" height="3" fill="#40b0b0" opacity=".9"/></svg>
<svg class="a" style="left:92px;top:302px" width="16" height="16" viewBox="0 0 16 16"><rect x="2" y="0" width="11" height="8" rx="1" fill="#333"/><rect x="4" y="2" width="7" height="4" fill="#90b0c8"/><text x="1" y="14" font-size="4" fill="#333" font-family="Liberation Sans">SMH 2Gi</text></svg>
<svg class="a" style="left:92px;top:319px" width="16" height="16" viewBox="0 0 16 16"><rect x="4" y="0" width="8" height="5" fill="#40e040"/><rect x="4" y="5" width="8" height="3" fill="#c0d040"/><circle cx="9" cy="12" r="4" fill="#3a70c0"/><rect x="0" y="8" width="16" height="4" fill="#e8e820"/></svg>
<svg class="a" style="left:92px;top:801px" width="16" height="16" viewBox="0 0 16 16"><rect x="0" y="6" width="15" height="6" fill="#3355ee"/><path d="M2 9H13" stroke="#cfd8ff" stroke-dasharray="1.5 .8"/></svg>
<svg class="a" style="left:92px;top:818px" width="16" height="16" viewBox="0 0 16 16"><rect x="3" y="1" width="11" height="8" fill="#50c050" stroke="#305a80" stroke-width=".8"/><path d="M1 13L9 6L12 9L4 16Z" fill="#207a40"/><path d="M7 12L11 9L15 12L11 15Z" fill="#e0a050" stroke="#604020" stroke-width=".8"/><rect x="9" y="10" width="4" height="2" fill="#333"/></svg>
<svg class="a" style="left:92px;top:835px" width="16" height="16" viewBox="0 0 16 16"><circle cx="3" cy="9" r="2.5" fill="#f0b020"/><path d="M5 9H15" stroke="#4a90c0" stroke-width="1.5" stroke-dasharray="2 .7"/></svg>
</div>
<div class="a" style="left:8px;top:59px;width:4px;height:1px;background:#5f8298"></div>
<div class="a" style="left:8px;top:60px;width:4px;height:1px;background:#fafcfd"></div>
<div class="a" style="left:8px;top:61px;width:4px;height:1px;background:#5f8298"></div>
<div class="a" style="left:8px;top:62px;width:4px;height:1px;background:#fafcfd"></div>
<div class="a" style="left:8px;top:63px;width:4px;height:1px;background:#5f8298"></div>
<div class="a" style="left:8px;top:64px;width:4px;height:1px;background:#fafcfd"></div>
<div class="a" style="left:8px;top:65px;width:4px;height:1px;background:#5f8298"></div>
<div class="a" style="left:8px;top:66px;width:4px;height:1px;background:#fafcfd"></div>
<div class="a" style="left:8px;top:67px;width:4px;height:1px;background:#5f8298"></div>
<div class="a" style="left:8px;top:68px;width:4px;height:1px;background:#fafcfd"></div>
<div class="a" style="left:8px;top:69px;width:4px;height:1px;background:#5f8298"></div>
<div class="a" style="left:8px;top:70px;width:4px;height:1px;background:#fafcfd"></div>
<div class="a" style="left:8px;top:71px;width:4px;height:1px;background:#5f8298"></div>
<div class="a" style="left:8px;top:72px;width:4px;height:1px;background:#fafcfd"></div>
<div class="a" style="left:8px;top:73px;width:4px;height:1px;background:#5f8298"></div>
<div class="a" style="left:8px;top:74px;width:4px;height:1px;background:#fafcfd"></div>
<div class="a" style="left:8px;top:75px;width:4px;height:1px;background:#5f8298"></div>
<div class="a" style="left:8px;top:76px;width:4px;height:1px;background:#fafcfd"></div>
<div class="a" style="left:8px;top:77px;width:4px;height:1px;background:#5f8298"></div>
<div class="a" style="left:8px;top:78px;width:4px;height:1px;background:#fafcfd"></div>
<div class="a" style="left:8px;top:79px;width:4px;height:1px;background:#5f8298"></div>
<div class="a" style="left:8px;top:80px;width:4px;height:1px;background:#fafcfd"></div>
<div class="a" style="left:685px;top:59px;width:4px;height:1px;background:#5f8298"></div>
<div class="a" style="left:685px;top:60px;width:4px;height:1px;background:#fafcfd"></div>
<div class="a" style="left:685px;top:61px;width:4px;height:1px;background:#5f8298"></div>
<div class="a" style="left:685px;top:62px;width:4px;height:1px;background:#fafcfd"></div>
<div class="a" style="left:685px;top:63px;width:4px;height:1px;background:#5f8298"></div>
<div class="a" style="left:685px;top:64px;width:4px;height:1px;background:#fafcfd"></div>
<div class="a" style="left:685px;top:65px;width:4px;height:1px;background:#5f8298"></div>
<div class="a" style="left:685px;top:66px;width:4px;height:1px;background:#fafcfd"></div>
<div class="a" style="left:685px;top:67px;width:4px;height:1px;background:#5f8298"></div>
<div class="a" style="left:685px;top:68px;width:4px;height:1px;background:#fafcfd"></div>
<div class="a" style="left:685px;top:69px;width:4px;height:1px;background:#5f8298"></div>
<div class="a" style="left:685px;top:70px;width:4px;height:1px;background:#fafcfd"></div>
<div class="a" style="left:685px;top:71px;width:4px;height:1px;background:#5f8298"></div>
<div class="a" style="left:685px;top:72px;width:4px;height:1px;background:#fafcfd"></div>
<div class="a" style="left:685px;top:73px;width:4px;height:1px;background:#5f8298"></div>
<div class="a" style="left:685px;top:74px;width:4px;height:1px;background:#fafcfd"></div>
<div class="a" style="left:685px;top:75px;width:4px;height:1px;background:#5f8298"></div>
<div class="a" style="left:685px;top:76px;width:4px;height:1px;background:#fafcfd"></div>
<div class="a" style="left:685px;top:77px;width:4px;height:1px;background:#5f8298"></div>
<div class="a" style="left:685px;top:78px;width:4px;height:1px;background:#fafcfd"></div>
<div class="a" style="left:685px;top:79px;width:4px;height:1px;background:#5f8298"></div>
<div class="a" style="left:685px;top:80px;width:4px;height:1px;background:#fafcfd"></div>
<div class="a" style="left:93px;top:57px;width:1px;height:25px;background:#88a4b6"></div>
<div class="a" style="left:94px;top:57px;width:1px;height:25px;background:#b2cad8"></div>
<div class="a" style="left:177px;top:57px;width:1px;height:25px;background:#88a4b6"></div>
<div class="a" style="left:178px;top:57px;width:1px;height:25px;background:#b2cad8"></div>
<div class="a" style="left:299px;top:57px;width:1px;height:25px;background:#88a4b6"></div>
<div class="a" style="left:300px;top:57px;width:1px;height:25px;background:#b2cad8"></div>
<div class="a" style="left:421px;top:57px;width:1px;height:25px;background:#88a4b6"></div>
<div class="a" style="left:422px;top:57px;width:1px;height:25px;background:#b2cad8"></div>
<div class="a" style="left:543px;top:57px;width:1px;height:25px;background:#88a4b6"></div>
<div class="a" style="left:544px;top:57px;width:1px;height:25px;background:#b2cad8"></div>
<div class="a" style="left:639px;top:57px;width:1px;height:25px;background:#88a4b6"></div>
<div class="a" style="left:640px;top:57px;width:1px;height:25px;background:#b2cad8"></div>
<div class="a" style="left:680px;top:51px;width:1px;height:37px;background:#7e9eb1"></div>
<div class="a" style="left:681px;top:51px;width:1px;height:37px;background:#b2cad8"></div>
<svg class="a" style="left:0;top:0" width="0" height="0"><defs>
<linearGradient id="gb" x1="0" y1="0" x2="0" y2="1"><stop offset="0" stop-color="#8ec4f4"/><stop offset=".45" stop-color="#3a86e0"/><stop offset="1" stop-color="#0e50b8"/></linearGradient>
<linearGradient id="gg" x1="0" y1="0" x2="0" y2="1"><stop offset="0" stop-color="#c4d4dc"/><stop offset=".5" stop-color="#98aab4"/><stop offset="1" stop-color="#6e848e"/></linearGradient>
<linearGradient id="gdb" x1="0" y1="0" x2="1" y2="0"><stop offset="0" stop-color="#2a88c0"/><stop offset=".5" stop-color="#8ad0f4"/><stop offset="1" stop-color="#1e6ea8"/></linearGradient>
<linearGradient id="gst" x1="0" y1="0" x2="0" y2="1"><stop offset="0" stop-color="#fff060"/><stop offset="1" stop-color="#f09010"/></linearGradient>
</defs></svg>
<svg class="a" style="left:23px;top:57px" width="19" height="25" viewBox="0 0 19 25"><path d="M1 7V20A8 3.5 0 0 0 17 20V7Z" fill="url(#gdb)" stroke="#1a5a88" stroke-width=".8"/><ellipse cx="9" cy="7" rx="8" ry="3.5" fill="#5ab4e4" stroke="#1a5a88" stroke-width=".8"/><path d="M1 11.5A8 3.5 0 0 0 17 11.5M1 16A8 3.5 0 0 0 17 16" stroke="#1a5a88" fill="none" stroke-width=".8"/><ellipse cx="10" cy="24" rx="7" ry="1" fill="#000" opacity=".25"/><path d="M9 0L16 6H12.5V14H5.5V6H2Z" fill="#5a2ed0" stroke="#3a1a90" stroke-width=".6"/></svg>
<svg class="a" style="left:62px;top:57px" width="19" height="25" viewBox="0 0 19 25"><path d="M1 7V20A8 3.5 0 0 0 17 20V7Z" fill="url(#gdb)" stroke="#1a5a88" stroke-width=".8"/><ellipse cx="9" cy="7" rx="8" ry="3.5" fill="#5ab4e4" stroke="#1a5a88" stroke-width=".8"/><path d="M1 11.5A8 3.5 0 0 0 17 11.5M1 16A8 3.5 0 0 0 17 16" stroke="#1a5a88" fill="none" stroke-width=".8"/><ellipse cx="10" cy="24" rx="7" ry="1" fill="#000" opacity=".25"/><path d="M1 0H16L13.5 4H11.5V9H15L8.5 16L2 9H5.5V4H3.5Z" fill="#20e070" stroke="#10a040" stroke-width=".6"/></svg>
<svg class="a" style="left:108px;top:58px" width="21" height="24" viewBox="0 0 21 24"><rect x=".5" y=".5" width="16" height="22" fill="#fff" stroke="#888"/><path d="M1 5H16M1 9H16M1 14H16M1 18H16" stroke="#777"/><rect x="1" y="9" width="15" height="5" fill="#0000e0"/><path d="M12 9.5V23M5 16H20" stroke="#0a5a1a" stroke-width="3.6"/><path d="M12 10.5V22M6 16H19" stroke="#28c040" stroke-width="1.8"/></svg>
<svg class="a" style="left:146px;top:58px" width="21" height="24" viewBox="0 0 21 24"><rect x=".5" y=".5" width="16" height="22" fill="#fff" stroke="#888"/><path d="M1 5H16M1 9H16M1 14H16M1 18H16" stroke="#777"/><rect x="1" y="9" width="15" height="5" fill="#0000e0"/><path d="M5 10L20 23M20 10L5 23" stroke="#e01010" stroke-width="2.2"/></svg>
<svg class="a" style="left:188px;top:57px" width="25" height="25" viewBox="0 0 25 25"><path d="M1 .5H16V13L12 17H1Z" fill="#f6f6f6" stroke="#c0c0c0"/><path d="M12 17V13H16" fill="#ddd" stroke="#bbb"/><path d="M8 7.5H23V20L19 24H8Z" fill="#f2f2f2" stroke="#c0c0c0"/><path d="M19 24V20H23" fill="#ddd" stroke="#bbb"/></svg>
<svg class="a" style="left:226px;top:57px" width="24" height="25" viewBox="0 0 24 25"><path d="M10.5 0.5Q8.5 7 11.5 14.5L13 13.5Q12 6 10.5 0.5Z" fill="#e4e4e4" stroke="#555" stroke-width=".7"/><path d="M23.5 8Q17 9 11.5 13.5L12.5 15Q19 12 23.5 8Z" fill="#e0e0e0" stroke="#555" stroke-width=".7"/><circle cx="5.3" cy="15.5" r="2.3" fill="none" stroke="#d00010" stroke-width="2.3"/><circle cx="13.7" cy="20.5" r="2.3" fill="none" stroke="#d00010" stroke-width="2.3"/><path d="M7.5 14.5L11.5 14L13 18" stroke="#d00010" stroke-width="2.2" fill="none"/></svg>
<svg class="a" style="left:266px;top:57px" width="22" height="25" viewBox="0 0 22 25"><rect x="1" y="3" width="15" height="20" fill="#9ab4c2" stroke="#8aa0ac" stroke-width=".8"/><rect x="5" y="1" width="8" height="3" fill="#a8bcc8" stroke="#8aa0ac" stroke-width=".8"/><rect x="5" y="6" width="15" height="18" fill="#bcd6e4" stroke="#9ab0bc" stroke-width=".8"/><path d="M7 10H18M7 13H18M7 16H18M7 19H15" stroke="#a4bccb" stroke-width=".8"/></svg>
<svg class="a" style="left:309px;top:56px" width="26" height="26" viewBox="0 0 26 26"><circle cx="13" cy="13" r="11.7" fill="url(#gb)" stroke="#0a2a90" stroke-width="1.4"/><ellipse cx="13" cy="8" rx="8" ry="5" fill="#fff" opacity=".25"/><path d="M13 19V7M7.5 12L13 6.5L18.5 12" stroke="#fff" stroke-width="2.6" fill="none"/></svg>
<svg class="a" style="left:347px;top:56px" width="26" height="26" viewBox="0 0 26 26"><circle cx="13" cy="13" r="11.7" fill="url(#gb)" stroke="#0a2a90" stroke-width="1.4"/><ellipse cx="13" cy="8" rx="8" ry="5" fill="#fff" opacity=".25"/><path d="M19 13H7M12 7.5L6.5 13L12 18.5" stroke="#fff" stroke-width="2.6" fill="none"/></svg>
<svg class="a" style="left:385px;top:56px" width="26" height="26" viewBox="0 0 26 26"><circle cx="13" cy="13" r="11.7" fill="url(#gg)" stroke="#70848e" stroke-width="1.4"/><ellipse cx="13" cy="8" rx="8" ry="5" fill="#fff" opacity=".25"/><path d="M7 13H19M14 7.5L19.5 13L14 18.5" stroke="#d8f0fc" stroke-width="2.6" fill="none"/></svg>
<svg class="a" style="left:431px;top:56px" width="26" height="26" viewBox="0 0 26 26"><circle cx="13" cy="13" r="11.7" fill="url(#gb)" stroke="#0a2a90" stroke-width="1.4"/><ellipse cx="13" cy="8" rx="8" ry="5" fill="#fff" opacity=".25"/><path d="M18 9.5A6 6 0 1 0 19 14" stroke="#fff" stroke-width="2.6" fill="none"/><path d="M15.5 13.5L20 19L21 12Z" fill="#fff"/></svg>
<svg class="a" style="left:469px;top:56px" width="26" height="26" viewBox="0 0 26 26"><circle cx="13" cy="13" r="11.7" fill="url(#gb)" stroke="#0a2a90" stroke-width="1.4"/><ellipse cx="13" cy="8" rx="8" ry="5" fill="#fff" opacity=".25"/><path d="M10 6.5V19.5L19 13Z" fill="#fff"/></svg>
<svg class="a" style="left:507px;top:56px" width="26" height="26" viewBox="0 0 26 26"><circle cx="13" cy="13" r="11.7" fill="url(#gg)" stroke="#70848e" stroke-width="1.4"/><ellipse cx="13" cy="8" rx="8" ry="5" fill="#fff" opacity=".25"/><path d="M8 8L18 18M18 8L8 18" stroke="#d8f0fc" stroke-width="3.2"/></svg>
<svg class="a" style="left:554px;top:57px" width="22" height="22" viewBox="0 0 22 22"><defs><linearGradient id="gs2" x1="0" y1="0" x2="0" y2="1"><stop offset="0" stop-color="#d4e4ec"/><stop offset="1" stop-color="#9cb4c0"/></linearGradient></defs><path d="M11 .5L14 7.5L21.5 8.3L15.8 13.3L17.5 20.7L11 16.8L4.5 20.7L6.2 13.3L.5 8.3L8 7.5Z" fill="url(#gs2)" stroke="#8aa4b2" stroke-width=".9"/></svg>
<svg class="a" style="left:584px;top:65px" width="12" height="8" viewBox="0 0 12 8"><path d="M1 1H11L6 7Z" fill="#5a6a72"/><path d="M11 1L6 7" stroke="#fff" stroke-width="1.2"/></svg>
<svg class="a" style="left:604px;top:56px" width="26" height="26" viewBox="0 0 26 26"><path d="M11 .5L14 7.5L21.5 8.3L15.8 13.3L17.5 20.7L11 16.8L4.5 20.7L6.2 13.3L.5 8.3L8 7.5Z" fill="url(#gst)" stroke="#e07a10" stroke-width=".9"/><path d="M16 14H21V18H24L18.5 24.5L13 18H16Z" fill="#10c010" stroke="#0a8a0a" stroke-width=".6"/></svg>
<svg class="a" style="left:650px;top:57px" width="27" height="25" viewBox="0 0 27 25"><path d="M2 2Q8 0 13 3V23Q8 20 1 22Z" fill="#d4eaf4" stroke="#9ab4c4" stroke-width=".8"/><path d="M13 3Q18 0 25 2L24 23Q18 21 13 23Z" fill="#c0dcea" stroke="#9ab4c4" stroke-width=".8"/><path d="M13 3V23" stroke="#9ab4c4"/></svg>
<svg class="a" style="left:696px;top:56px" width="27" height="27" viewBox="0 0 27 27"><circle cx="13" cy="13" r="12" fill="#3a66d0" stroke="#2a4a8a" stroke-width=".8"/><rect x="7" y="4" width="10" height="6" fill="#0a1a0a" stroke="#666" stroke-width=".6"/><path d="M8.5 7H15.5" stroke="#20c020" stroke-width="1.5" stroke-dasharray="1.5 .8"/><circle cx="6" cy="19" r="5.5" fill="#d0d060" stroke="#7a7a30" stroke-width=".6"/><path d="M3 23L10 15M5 19L8 21" stroke="#111" stroke-width="1.2"/><path d="M11 9L21 21" stroke="#999" stroke-width="3.2"/><circle cx="11" cy="10" r="3" fill="none" stroke="#aaa" stroke-width="2"/><path d="M16 15H25" stroke="#e0d020" stroke-width="1" stroke-dasharray="2 1"/></svg>
<svg class="a" style="left:734px;top:56px" width="27" height="27" viewBox="0 0 27 27"><circle cx="13" cy="13" r="12" fill="#3a66d0" stroke="#2a4a8a" stroke-width=".8"/><rect x="7" y="4" width="10" height="6" fill="#0a1a0a" stroke="#666" stroke-width=".6"/><path d="M8.5 7H15.5" stroke="#20c020" stroke-width="1.5" stroke-dasharray="1.5 .8"/><circle cx="6" cy="19" r="5.5" fill="#d0d060" stroke="#7a7a30" stroke-width=".6"/><path d="M3 23L10 15M5 19L8 21" stroke="#111" stroke-width="1.2"/><path d="M9 17L22 3" stroke="#e8c090" stroke-width="3.5"/><path d="M9 17L7.5 19" stroke="#333" stroke-width="2"/><path d="M13 16H25" stroke="#e0d020" stroke-width="1.4" stroke-dasharray="2 1"/></svg>
<svg class="a" style="left:7px;top:6px" width="18" height="18" viewBox="0 0 18 18"><circle cx="9.5" cy="8" r="7.5" fill="#3a66d0"/><rect x="4" y="2" width="8" height="5" fill="#0a1a0a"/><path d="M5 4.5H11" stroke="#20c020" stroke-width="1.2"/><circle cx="4.5" cy="13" r="4" fill="#d0d060"/><path d="M2 16L7 11" stroke="#111" stroke-width="1"/><path d="M8 7L14 14" stroke="#aaa" stroke-width="2.4"/></svg>
</body></html>
